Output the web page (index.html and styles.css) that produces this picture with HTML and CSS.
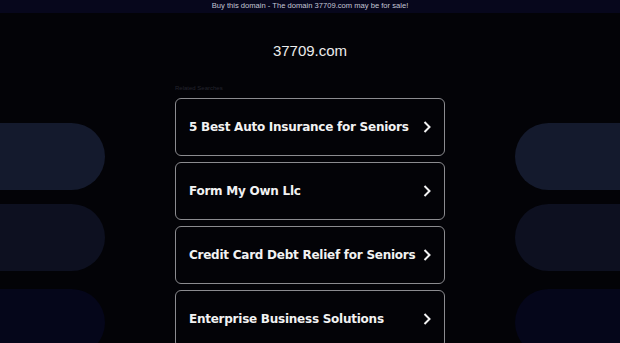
FILE: index.html
```html
<!DOCTYPE html>
<html lang="en">
<head>
  <meta charset="UTF-8">
  <meta name="viewport" content="width=device-width, initial-scale=1.0">
  <title>37709.com</title>
  <link rel="stylesheet" href="styles.css">
</head>
<body>
  <div class="topbar">Buy this domain - The domain 37709.com may be for sale!</div>

  <!-- background pills, purely decorative -->
  <div class="pill left p1"></div>
  <div class="pill left p2"></div>
  <div class="pill left p3"></div>
  <div class="pill right p1"></div>
  <div class="pill right p2"></div>
  <div class="pill right p3"></div>

  <main class="content">
    <h1 class="domain">37709.com</h1>
    <div class="related">Related Searches</div>
    <div class="links">
      <a class="link" href="#"><span>5 Best Auto Insurance for Seniors</span><svg viewBox="0 0 8 12" width="8" height="12"><path d="M1.5 1 L6.5 6 L1.5 11" /></svg></a>
      <a class="link" href="#"><span>Form My Own Llc</span><svg viewBox="0 0 8 12" width="8" height="12"><path d="M1.5 1 L6.5 6 L1.5 11" /></svg></a>
      <a class="link" href="#"><span>Credit Card Debt Relief for Seniors</span><svg viewBox="0 0 8 12" width="8" height="12"><path d="M1.5 1 L6.5 6 L1.5 11" /></svg></a>
      <a class="link" href="#"><span>Enterprise Business Solutions</span><svg viewBox="0 0 8 12" width="8" height="12"><path d="M1.5 1 L6.5 6 L1.5 11" /></svg></a>
    </div>
  </main>
</body>
</html>
```

FILE: styles.css
```css
body {
  margin: 0;
  padding: 0;
  height: 343px;
  overflow: hidden;
  position: relative;
  background-color: #030307;
  font-family: "Liberation Sans", Arial, sans-serif;
}

.topbar {
  height: 13px;
  line-height: 12px;
  text-align: center;
  font-size: 7.6px;
  color: #c4c6d6;
  background-color: #07071c;
}

/* pills behind the list */
.pill {
  position: absolute;
  width: 105px;
  height: 67px;
  z-index: 0;
}
.pill.left {
  left: 0;
  border-radius: 0 34px 34px 0;
}
.pill.right {
  right: 0;
  border-radius: 34px 0 0 34px;
}
.pill.p1 { top: 123px; background-color: #141a2d; }
.pill.p2 { top: 204px; background-color: #0d1020; }
.pill.p3 { top: 289px; background-color: #05061a; }

.content {
  position: relative;
  z-index: 1;
  width: 270px;
  margin: 0 auto;
  display: flex;
  flex-direction: column;
}

.domain {
  margin: 29px 0 0;
  text-align: center;
  font-size: 15px;
  font-weight: normal;
  line-height: 18px;
  color: #ececec;
}

.related {
  margin-top: 25px;
  height: 13px;
  font-size: 6px;
  color: #23232e;
}

.links {
  display: flex;
  flex-direction: column;
  gap: 6px;
}

.link {
  box-sizing: border-box;
  height: 58px;
  display: flex;
  align-items: center;
  justify-content: space-between;
  padding: 0 13px 0 13px;
  border: 1.5px solid #8b8b8f;
  border-radius: 6px;
  background-color: #030307;
  text-decoration: none;
  color: #f2f2f2;
  font-family: "DejaVu Sans", Verdana, sans-serif;
  font-weight: bold;
  font-size: 12px;
  letter-spacing: -0.25px;
  white-space: nowrap;
}

.link svg {
  flex: none;
  fill: none;
  stroke: #f2f2f2;
  stroke-width: 2;
}
```
